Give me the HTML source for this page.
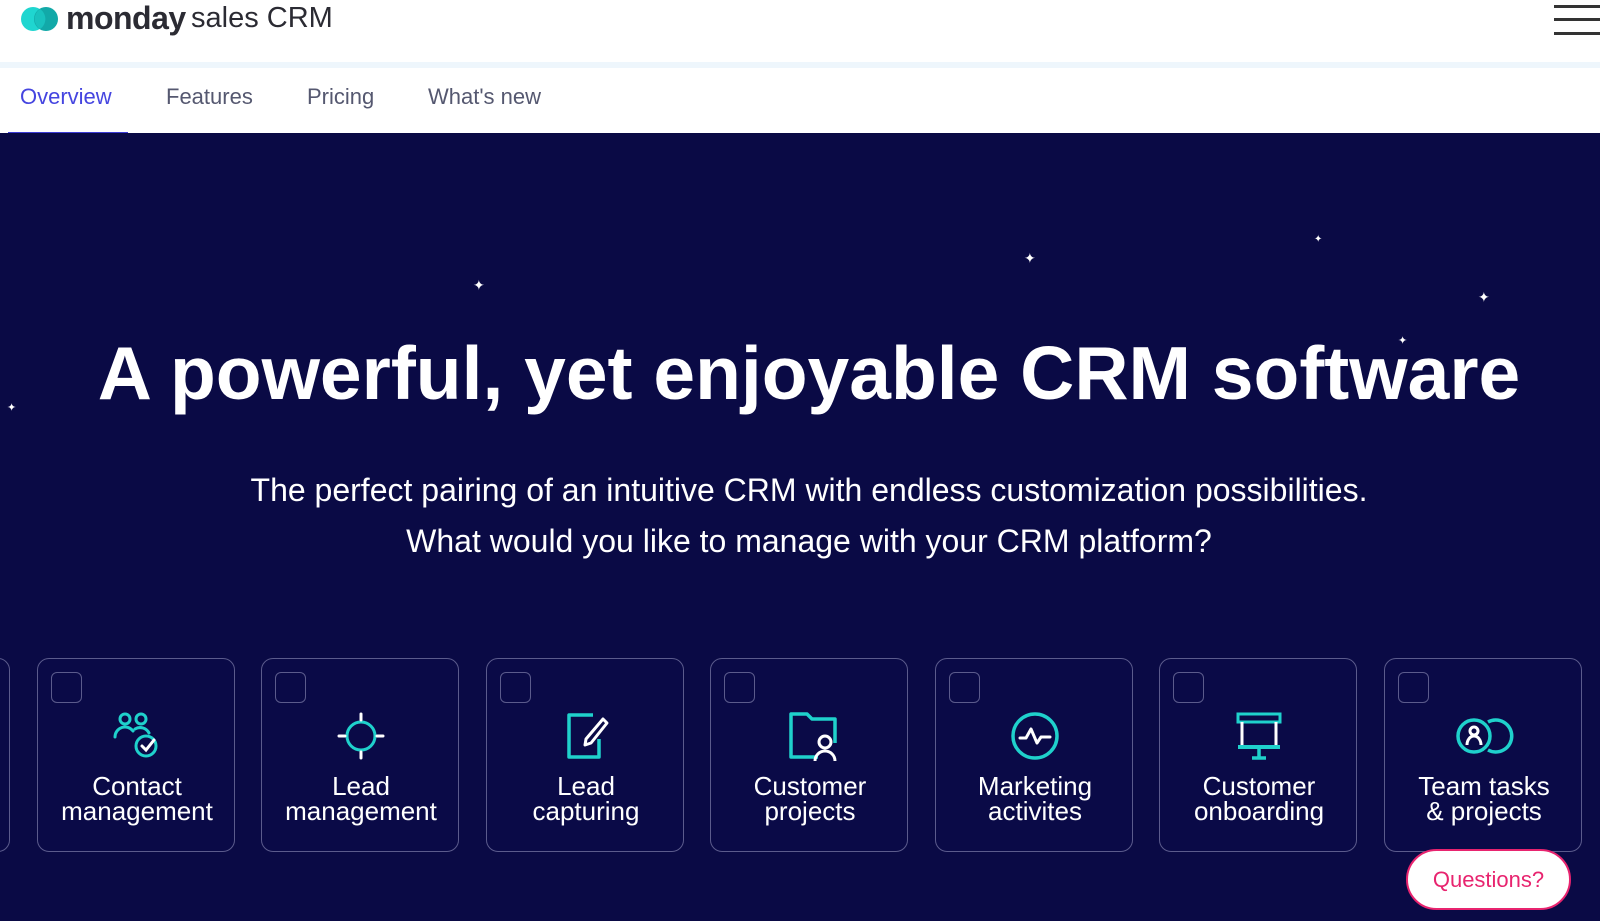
<!DOCTYPE html>
<html><head><meta charset="utf-8"><style>
*{margin:0;padding:0;box-sizing:border-box}
body{width:1600px;height:921px;overflow:hidden;background:#0a0a45;font-family:"Liberation Sans",sans-serif;position:relative}
.top{position:absolute;left:0;top:0;width:1600px;height:62px;background:#fff}
.nav{position:absolute;left:0;top:62px;width:1600px;height:71px;background:#fff;border-top:6px solid #eef6fc}
.nav a{position:absolute;top:16px;font-size:22px;color:#555870;text-decoration:none}
.ul{position:absolute;left:8px;top:64px;width:120px;height:2px;background:#3b3bd6}
.hero{position:absolute;left:0;top:133px;width:1600px;height:788px;background:#0a0a45}
h1{position:absolute;left:0;width:1618px;top:328px;text-align:center;color:#fff;font-size:75px;font-weight:bold;line-height:90px}
.sub{position:absolute;left:0;width:1618px;text-align:center;color:#fff;font-size:32px}
.card{position:absolute;top:658px;width:198px;height:194px;border:1.5px solid #5b5b8c;border-radius:12px;background:#0a0a47}
.cb{position:absolute;left:13px;top:13px;width:31px;height:31px;border:1.5px solid #5b5b8c;border-radius:6px}
.card svg{position:absolute;left:74px;top:50px}
.lbl{position:absolute;left:-10px;width:218px;top:115px;text-align:center;color:#fff;font-size:26px;line-height:25px}
.star{position:absolute;color:#fff;font-size:14px;line-height:14px}
.q{position:absolute;left:1406px;top:849px;width:165px;height:61px;background:#fff;border:2px solid #e8246f;border-radius:31px;color:#e8246f;font-size:22px;text-align:center;line-height:57px}
</style></head><body>
<div class="top">
<svg style="position:absolute;left:20px;top:5px" width="40" height="28" viewBox="0 0 40 28"><circle cx="13" cy="14" r="12" fill="#1fd6d0"/><circle cx="26" cy="14" r="12" fill="#12a9a8"/><path d="M20 4a12 12 0 0 1 0 20a12 12 0 0 1 0-20z" fill="#19c2be"/></svg>
<span style="position:absolute;left:66px;top:0px;font-size:32px;font-weight:bold;color:#2b2b33;letter-spacing:-0.5px">monday</span>
<span style="position:absolute;left:191px;top:2px;font-size:29px;color:#2b2b33">sales CRM</span>
<div style="position:absolute;left:1554px;top:5px;width:46px;height:3px;background:#333"></div>
<div style="position:absolute;left:1554px;top:18px;width:46px;height:3px;background:#333"></div>
<div style="position:absolute;left:1554px;top:32px;width:46px;height:3px;background:#333"></div>
</div>
<div class="nav">
<a style="left:20px;color:#4545e0">Overview</a><a style="left:166px">Features</a><a style="left:307px">Pricing</a><a style="left:428px">What's new</a>
<div class="ul"></div>
</div>
<div class="hero"></div>
<span class="star" style="left:473px;top:278px">✦</span>
<span class="star" style="left:1024px;top:251px">✦</span>
<span class="star" style="left:1314px;top:233px;font-size:10px">✦</span>
<span class="star" style="left:1478px;top:290px">✦</span>
<span class="star" style="left:1398px;top:334px;font-size:11px">✦</span>
<span class="star" style="left:7px;top:401px;font-size:11px">✦</span>
<h1>A powerful, yet enjoyable CRM software</h1>
<div class="sub" style="top:472px">The perfect pairing of an intuitive CRM with endless customization possibilities.</div>
<div class="sub" style="top:523px">What would you like to manage with your CRM platform?</div>

<div class="card" style="left:-188px"></div>
<div class="card" style="left:37px"><div class="cb"></div>
<svg width="50" height="54" viewBox="0 0 50 54" fill="none" stroke-width="3" stroke-linecap="round"><circle cx="13" cy="10" r="5" stroke="#1fd1cc"/><circle cx="29" cy="10" r="5" stroke="#1fd1cc"/><path d="M3 28a10 10 0 0 1 18-6" stroke="#1fd1cc"/><path d="M23 20a10 10 0 0 1 14 4" stroke="#1fd1cc"/><circle cx="34" cy="37" r="10" stroke="#1fd1cc"/><path d="M30 37l4 4 8-10" stroke="#fff"/></svg>
<div class="lbl">Contact<br>management</div></div>
<div class="card" style="left:261px"><div class="cb"></div>
<svg width="50" height="54" viewBox="0 0 50 54" fill="none" stroke-width="3" stroke-linecap="round"><circle cx="25" cy="27" r="14" stroke="#1fd1cc"/><path d="M25 5v6M25 43v6M3 27h6M41 27h6" stroke="#fff"/></svg>
<div class="lbl">Lead<br>management</div></div>
<div class="card" style="left:486px"><div class="cb"></div>
<svg width="50" height="54" viewBox="0 0 50 54" fill="none" stroke-width="3.5" stroke-linejoin="round"><path d="M32 6H8v42h30V30" stroke="#1fd1cc"/><path d="M42 10l4 4-16 20-6 2 1-6z" stroke="#fff" stroke-width="3"/></svg>
<div class="lbl">Lead<br>capturing</div></div>
<div class="card" style="left:710px"><div class="cb"></div>
<svg width="54" height="54" viewBox="0 0 54 54" fill="none" stroke-width="3.5"><path d="M33 48H6V5h16l5 5h23v24" stroke="#1fd1cc" stroke-linejoin="round"/><circle cx="40" cy="33" r="6" stroke="#fff" stroke-width="3"/><path d="M30 52a10 10 0 0 1 20 0" stroke="#fff" stroke-width="3"/></svg>
<div class="lbl">Customer<br>projects</div></div>
<div class="card" style="left:935px"><div class="cb"></div>
<svg width="50" height="54" viewBox="0 0 50 54" fill="none" stroke-width="3.5" stroke-linecap="round" stroke-linejoin="round"><circle cx="25" cy="27" r="22" stroke="#1fd1cc"/><path d="M10 29h6l5-9 6 14 4-6h9" stroke="#fff" stroke-width="3"/></svg>
<div class="lbl">Marketing<br>activites</div></div>
<div class="card" style="left:1159px"><div class="cb"></div>
<svg width="50" height="54" viewBox="0 0 50 54" fill="none" stroke-width="3"><rect x="4" y="5" width="42" height="8" stroke="#1fd1cc" fill="none"/><path d="M8 13v24M42 13v24" stroke="#fff"/><path d="M4 38h42" stroke="#1fd1cc" stroke-width="4"/><path d="M25 40v8M18 49h14" stroke="#1fd1cc" stroke-width="3.5"/></svg>
<div class="lbl">Customer<br>onboarding</div></div>
<div class="card" style="left:1384px"><div class="cb"></div>
<svg width="60" height="54" viewBox="0 0 60 54" fill="none" stroke-width="3.5" style="left:69px"><circle cx="20" cy="27" r="16" stroke="#1fd1cc"/><path d="M34 13a16 16 0 1 1 0 28" stroke="#1fd1cc"/><circle cx="20" cy="22" r="4" stroke="#fff" stroke-width="3"/><path d="M13 36a7 9 0 0 1 14 0" stroke="#fff" stroke-width="3"/></svg>
<div class="lbl">Team tasks<br>&amp; projects</div></div>
<div class="q">Questions?</div>
</body></html>
